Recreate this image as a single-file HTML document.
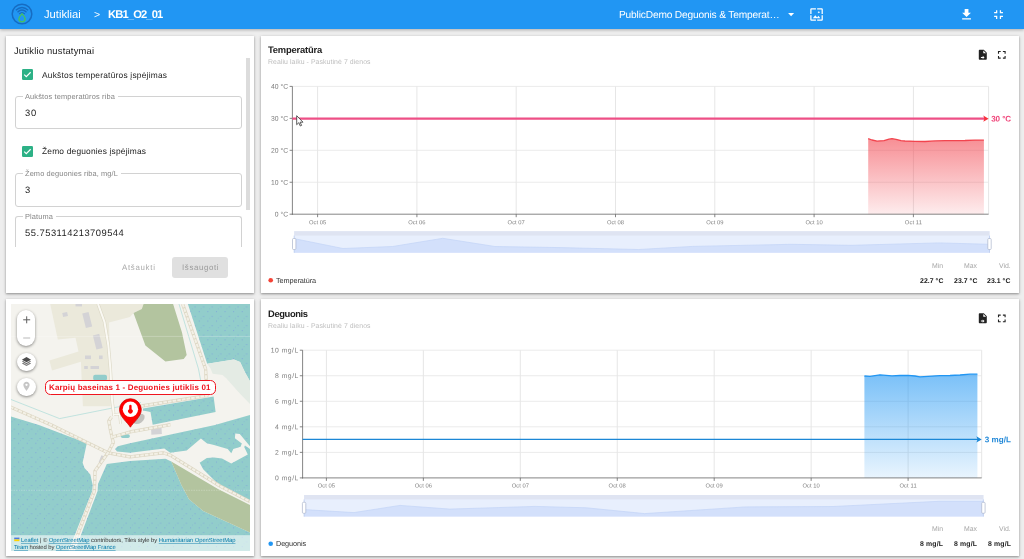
<!DOCTYPE html>
<html lang="lt"><head><meta charset="utf-8"><title>KB1_O2_01</title>
<style>
html,body{margin:0;padding:0}
body{width:1024px;height:559px;overflow:hidden;background:#eeeeee;font-family:"Liberation Sans",sans-serif;position:relative}
.t{position:absolute;white-space:nowrap;line-height:20px;transform:rotate(0.03deg)}
#app{position:absolute;left:0;top:0;width:1024px;height:559px;background:#eeeeee;will-change:transform;overflow:hidden}
header{position:absolute;left:0;top:0;width:1024px;height:29.2px;background:#2196f3;box-shadow:0 1px 3px rgba(0,0,0,.28);z-index:5}
header svg{position:absolute}
.card{position:absolute;background:#fff;box-shadow:0 1px 2px rgba(0,0,0,.30),0 1px 4px rgba(0,0,0,.16)}
.card svg{position:absolute;left:0;top:0}
.field{position:absolute;border:1px solid #d2d2d2;border-radius:3px;box-sizing:border-box}
.notch{position:absolute;background:#fff;height:4px}
.cb{position:absolute;width:10.7px;height:10.7px;border-radius:1.3px;background:#2db186}
.btn{position:absolute;background:#e0e0e0;border-radius:3px}
.sb{position:absolute;background:#dcdcdc}
.mbtn{position:absolute;background:#fff;box-shadow:0 1px 3px rgba(0,0,0,.45)}
</style></head>
<body>
<div id="app">
<header>
<svg style="left:10.2px;top:2.2px" width="24" height="24" viewBox="0 0 24 24">
 <circle cx="12" cy="12" r="9.8" fill="none" stroke="#166cc2" stroke-width="1.5"/>
 <path d="M5.800 8.300 Q12 2.600 18.200 8.300" fill="none" stroke="#166cc2" stroke-width="1.3"/>
 <path d="M7.500 10.200 Q12 5.800 16.500 10.200" fill="none" stroke="#166cc2" stroke-width="1.3"/>
 <path d="M9.200 12 Q12 9.200 14.800 12" fill="none" stroke="#166cc2" stroke-width="1.2"/>
 <path d="M12 11.800 C13.500 13.700 15.100 14.900 15.100 16.700 A3.100 3.100 0 0 1 8.900 16.700 C8.900 14.900 10.500 13.700 12 11.800Z" fill="none" stroke="#46c062" stroke-width="1.3"/>
</svg>
<span class="t" style="font-size:11.2px;font-weight:400;color:#fff;letter-spacing:0.002px;left:44.00px;top:4.00px;">Jutikliai</span>
<span class="t" style="font-size:10.5px;font-weight:400;color:#fff;letter-spacing:0.000px;left:93.90px;top:4.00px;">></span>
<span class="t" style="font-size:11.2px;font-weight:700;color:#fff;letter-spacing:-0.863px;left:108.00px;top:4.00px;">KB1_O2_01</span>
<span class="t" style="font-size:10.2px;font-weight:400;color:#fff;letter-spacing:-0.171px;left:618.70px;top:5.00px;">PublicDemo Deguonis & Temperat…</span>
<svg style="left:786px;top:10px" width="10" height="10" viewBox="0 0 10 10"><path d="M2.1 2.900h6l-3 3.400z" fill="#fff"/></svg>
<svg style="left:808.600px;top:7.200px" width="15.1" height="15.1" viewBox="0 0 24 24"><path fill="#fff" d="M4 4h7V2H4c-1.100 0-2 .900-2 2v7h2V4zm6 9l-4 5h12l-3-4-2.030 2.710L10 13zm7-4.500c0-.830-.670-1.500-1.500-1.500S14 7.670 14 8.500s.670 1.500 1.500 1.500S17 9.330 17 8.500zM20 2h-7v2h7v7h2V4c0-1.100-.900-2-2-2zm0 18h-7v2h7c1.100 0 2-.900 2-2v-7h-2v7zM4 13H2v7c0 1.100.900 2 2 2h7v-2H4v-7z"/></svg>
<svg style="left:958.900px;top:7.100px" width="15.1" height="15.1" viewBox="0 0 24 24"><path fill="#fff" d="M19 9h-4V3H9v6H5l7 7 7-7zM5 18v2h14v-2H5z"/></svg>
<svg style="left:990.900px;top:7.100px" width="15.1" height="15.1" viewBox="0 0 24 24"><path fill="#fff" d="M5 16h3v3h2v-5H5v2zm3-8H5v2h5V5H8v3zm6 11h2v-3h3v-2h-5v5zm2-11V5h-2v5h5V8h-3z"/></svg>
</header>
<section class="card" style="left:6.3px;top:35.7px;width:247.8px;height:257.3px">
<div class="cb" style="left:16.10px;top:33.30px"><svg width="10.7" height="10.7" viewBox="0 0 24 24" style="position:absolute;left:0;top:0"><path d="M5 12.500l4.600 4.600L19.400 7.300" fill="none" stroke="#fff" stroke-width="2.600"/></svg></div>
<div class="field" style="left:8.80px;top:60.50px;width:227.20px;height:33.20px"></div><div class="notch" style="left:16.50px;top:59.30px;width:95.20px;height:4.00px"></div>
<div class="cb" style="left:16.10px;top:110.40px"><svg width="10.7" height="10.7" viewBox="0 0 24 24" style="position:absolute;left:0;top:0"><path d="M5 12.500l4.600 4.600L19.400 7.300" fill="none" stroke="#fff" stroke-width="2.600"/></svg></div>
<div class="field" style="left:8.80px;top:137.30px;width:227.20px;height:33.90px"></div><div class="notch" style="left:16.50px;top:136.30px;width:98.20px;height:4.00px"></div>
<div class="field" style="left:8.80px;top:180.50px;width:227.20px;height:31.20px;border-bottom:none;border-radius:3px 3px 0 0"></div><div class="notch" style="left:16.50px;top:179.30px;width:33.20px;height:4.00px"></div>
<div class="sb" style="left:240.00px;top:22.30px;width:3.50px;height:152.00px"></div>
<div class="btn" style="left:166.00px;top:221.40px;width:55.60px;height:21.20px"></div>
<span class="t" style="font-size:9.4px;font-weight:400;color:#212121;letter-spacing:0.189px;left:7.70px;top:5.30px;">Jutiklio nustatymai</span>
<span class="t" style="font-size:8.4px;font-weight:400;color:#212121;letter-spacing:0.217px;left:35.70px;top:29.30px;">Aukštos temperatūros įspėjimas</span>
<span class="t" style="font-size:7.4px;font-weight:400;color:#858585;letter-spacing:0.147px;left:19.20px;top:51.30px;">Aukštos temperatūros riba</span>
<span class="t" style="font-size:9.4px;font-weight:400;color:#212121;letter-spacing:0.663px;left:19.20px;top:67.30px;">30</span>
<span class="t" style="font-size:8.4px;font-weight:400;color:#212121;letter-spacing:0.190px;left:35.70px;top:105.30px;">Žemo deguonies įspėjimas</span>
<span class="t" style="font-size:7.4px;font-weight:400;color:#858585;letter-spacing:0.118px;left:19.20px;top:128.30px;">Žemo deguonies riba, mg/L</span>
<span class="t" style="font-size:9.4px;font-weight:400;color:#212121;letter-spacing:0.000px;left:19.20px;top:144.30px;">3</span>
<span class="t" style="font-size:7.4px;font-weight:400;color:#858585;letter-spacing:0.112px;left:19.20px;top:171.30px;">Platuma</span>
<span class="t" style="font-size:9.4px;font-weight:400;color:#212121;letter-spacing:0.485px;left:19.20px;top:187.30px;">55.753114213709544</span>
<span class="t" style="font-size:7.9px;font-weight:400;color:#ababab;letter-spacing:0.689px;left:115.90px;top:222.30px;">Atšaukti</span>
<span class="t" style="font-size:7.9px;font-weight:400;color:#9a9a9a;letter-spacing:0.626px;left:175.50px;top:222.30px;">Išsaugoti</span>
</section>
<section class="card" style="left:260.6px;top:35.7px;width:758.4px;height:257.3px">
<svg style="left:-0.60px;top:-0.70px" width="760" height="259" viewBox="260 35 760 259" font-family="Liberation Sans, sans-serif">
<defs><linearGradient id="g1" x1="0" y1="0" x2="0" y2="1"><stop offset="0" stop-color="#f2444e" stop-opacity=".60"/><stop offset="1" stop-color="#f2444e" stop-opacity=".10"/></linearGradient></defs>
<line x1="292.4" y1="86.40" x2="988.6" y2="86.40" stroke="#ebebeb" stroke-width="1"/>
<line x1="292.4" y1="118.35" x2="988.6" y2="118.35" stroke="#ebebeb" stroke-width="1"/>
<line x1="292.4" y1="150.30" x2="988.6" y2="150.30" stroke="#ebebeb" stroke-width="1"/>
<line x1="292.4" y1="182.25" x2="988.6" y2="182.25" stroke="#ebebeb" stroke-width="1"/>
<line x1="317.60" y1="86.4" x2="317.60" y2="214.2" stroke="#e6e6e6" stroke-width="1"/>
<line x1="416.90" y1="86.4" x2="416.90" y2="214.2" stroke="#e6e6e6" stroke-width="1"/>
<line x1="516.20" y1="86.4" x2="516.20" y2="214.2" stroke="#e6e6e6" stroke-width="1"/>
<line x1="615.50" y1="86.4" x2="615.50" y2="214.2" stroke="#e6e6e6" stroke-width="1"/>
<line x1="714.80" y1="86.4" x2="714.80" y2="214.2" stroke="#e6e6e6" stroke-width="1"/>
<line x1="814.10" y1="86.4" x2="814.10" y2="214.2" stroke="#e6e6e6" stroke-width="1"/>
<line x1="913.40" y1="86.4" x2="913.40" y2="214.2" stroke="#e6e6e6" stroke-width="1"/>
<line x1="988.60" y1="86.4" x2="988.60" y2="214.2" stroke="#e6e6e6" stroke-width="1"/>
<polygon points="868.2,138.7 872.0,140.0 877.0,141.1 884.0,140.6 889.0,139.2 892.0,138.7 896.0,139.3 901.0,140.6 905.0,141.0 915.0,141.3 925.0,141.5 935.0,140.9 945.0,140.7 955.0,140.6 965.0,140.5 975.0,140.1 983.9,140.2 983.9,214.2 868.2,214.2" fill="url(#g1)"/>
<polyline points="868.2,138.7 872.0,140.0 877.0,141.1 884.0,140.6 889.0,139.2 892.0,138.7 896.0,139.3 901.0,140.6 905.0,141.0 915.0,141.3 925.0,141.5 935.0,140.9 945.0,140.7 955.0,140.6 965.0,140.5 975.0,140.1 983.9,140.2" fill="none" stroke="#f2444e" stroke-width="1.3" stroke-linejoin="round"/>
<line x1="292.40" y1="86.4" x2="292.40" y2="214.7" stroke="#666" stroke-width=".8"/>
<line x1="291.90" y1="214.20" x2="988.60" y2="214.20" stroke="#666" stroke-width=".8"/>
<line x1="289.60" y1="86.40" x2="292.40" y2="86.40" stroke="#666" stroke-width=".8"/>
<text x="288.1" y="88.8" font-size="6.8" fill="#7e7e7e" text-anchor="end" font-weight="400" transform="rotate(0.03 288.1 88.8)">40 °C</text>
<line x1="289.60" y1="118.35" x2="292.40" y2="118.35" stroke="#666" stroke-width=".8"/>
<text x="288.1" y="120.8" font-size="6.8" fill="#7e7e7e" text-anchor="end" font-weight="400" transform="rotate(0.03 288.1 120.8)">30 °C</text>
<line x1="289.60" y1="150.30" x2="292.40" y2="150.30" stroke="#666" stroke-width=".8"/>
<text x="288.1" y="152.7" font-size="6.8" fill="#7e7e7e" text-anchor="end" font-weight="400" transform="rotate(0.03 288.1 152.7)">20 °C</text>
<line x1="289.60" y1="182.25" x2="292.40" y2="182.25" stroke="#666" stroke-width=".8"/>
<text x="288.1" y="184.7" font-size="6.8" fill="#7e7e7e" text-anchor="end" font-weight="400" transform="rotate(0.03 288.1 184.7)">10 °C</text>
<line x1="289.60" y1="214.20" x2="292.40" y2="214.20" stroke="#666" stroke-width=".8"/>
<text x="288.1" y="216.6" font-size="6.8" fill="#7e7e7e" text-anchor="end" font-weight="400" transform="rotate(0.03 288.1 216.6)">0 °C</text>
<line x1="317.60" y1="214.2" x2="317.60" y2="217.2" stroke="#666" stroke-width=".8"/>
<text x="317.6" y="224.2" font-size="5.8" fill="#7e7e7e" text-anchor="middle" font-weight="400" textLength="17.2" lengthAdjust="spacing" transform="rotate(0.03 317.6 224.2)">Oct 05</text>
<line x1="416.90" y1="214.2" x2="416.90" y2="217.2" stroke="#666" stroke-width=".8"/>
<text x="416.9" y="224.2" font-size="5.8" fill="#7e7e7e" text-anchor="middle" font-weight="400" textLength="17.2" lengthAdjust="spacing" transform="rotate(0.03 416.9 224.2)">Oct 06</text>
<line x1="516.20" y1="214.2" x2="516.20" y2="217.2" stroke="#666" stroke-width=".8"/>
<text x="516.2" y="224.2" font-size="5.8" fill="#7e7e7e" text-anchor="middle" font-weight="400" textLength="17.2" lengthAdjust="spacing" transform="rotate(0.03 516.2 224.2)">Oct 07</text>
<line x1="615.50" y1="214.2" x2="615.50" y2="217.2" stroke="#666" stroke-width=".8"/>
<text x="615.5" y="224.2" font-size="5.8" fill="#7e7e7e" text-anchor="middle" font-weight="400" textLength="17.2" lengthAdjust="spacing" transform="rotate(0.03 615.5 224.2)">Oct 08</text>
<line x1="714.80" y1="214.2" x2="714.80" y2="217.2" stroke="#666" stroke-width=".8"/>
<text x="714.8" y="224.2" font-size="5.8" fill="#7e7e7e" text-anchor="middle" font-weight="400" textLength="17.2" lengthAdjust="spacing" transform="rotate(0.03 714.8 224.2)">Oct 09</text>
<line x1="814.10" y1="214.2" x2="814.10" y2="217.2" stroke="#666" stroke-width=".8"/>
<text x="814.1" y="224.2" font-size="5.8" fill="#7e7e7e" text-anchor="middle" font-weight="400" textLength="17.2" lengthAdjust="spacing" transform="rotate(0.03 814.1 224.2)">Oct 10</text>
<line x1="913.40" y1="214.2" x2="913.40" y2="217.2" stroke="#666" stroke-width=".8"/>
<text x="913.4" y="224.2" font-size="5.8" fill="#7e7e7e" text-anchor="middle" font-weight="400" textLength="17.2" lengthAdjust="spacing" transform="rotate(0.03 913.4 224.2)">Oct 11</text>
<line x1="292.4" y1="118.70" x2="985.6" y2="118.70" stroke="#ee4f86" stroke-width="2.2"/>
<polygon points="983.3,115.6 988.6,118.7 983.3,121.8 984.4,118.7" fill="#f8323c"/>
<text x="991.2" y="121.6" font-size="8.1" fill="#f0457a" text-anchor="start" font-weight="700" textLength="20.0" lengthAdjust="spacing" transform="rotate(0.03 991.2 121.6)">30 °C</text>
<rect x="294.2" y="231.2" width="695.3" height="21.6" fill="#e8effd"/>
<polygon points="294.2,238.6 296.0,239.0 343.0,248.5 392.5,246.5 442.8,238.3 495.0,246.5 560.0,247.6 638.6,249.5 692.7,246.4 791.0,244.3 851.0,245.3 939.0,242.9 989.5,244.3 989.5,252.8 294.2,252.8" fill="#d3e0fb"/>
<polyline points="294.2,238.6 296.0,239.0 343.0,248.5 392.5,246.5 442.8,238.3 495.0,246.5 560.0,247.6 638.6,249.5 692.7,246.4 791.0,244.3 851.0,245.3 939.0,242.9 989.5,244.3" fill="none" stroke="#c3d4f6" stroke-width=".7"/>
<rect x="294.2" y="231.2" width="695.3" height="4.4" fill="#dfe4f2"/>
<line x1="294.2" y1="235.6" x2="294.2" y2="252.8" stroke="#b9c9ee" stroke-width=".8"/>
<rect x="292.5" y="238.5" width="3.4" height="11" rx="1" fill="#fff" stroke="#aab4cc" stroke-width=".7"/>
<line x1="989.5" y1="235.6" x2="989.5" y2="252.8" stroke="#b9c9ee" stroke-width=".8"/>
<rect x="987.8" y="238.5" width="3.4" height="11" rx="1" fill="#fff" stroke="#aab4cc" stroke-width=".7"/>
<circle cx="270.7" cy="280.3" r="2.3" fill="#f44336"/>
<g fill="#222"><path transform="translate(976.8,48.7) scale(.5)" d="M14 2H6c-1.100 0-2 .900-2 2v16c0 1.100.900 2 2 2h12c1.100 0 2-.900 2-2V8l-6-6zm-1 1.500L18.500 9H13V3.500zM8.200 18.600l0-2.200 3.600 0 0-2.100 3.700 3.200-3.700 3.200 0-2.100z" fill-rule="evenodd"/>
<path transform="translate(995.2,48.2) scale(.55)" d="M7 14H5v5h5v-2H7v-3zm-2-4h2V7h3V5H5v5zm12 7h-3v2h5v-5h-2v3zM14 5v2h3v3h2V5h-5z"/></g>
</svg>
<span class="t" style="font-size:9.4px;font-weight:700;color:#212121;letter-spacing:-0.189px;left:7.40px;top:4.30px;">Temperatūra</span>
<span class="t" style="font-size:6.9px;font-weight:400;color:#bdbdbd;letter-spacing:0.079px;left:7.40px;top:16.30px;">Realiu laiku - Paskutinė 7 dienos</span>
<span class="t" style="font-size:7.3px;font-weight:400;color:#333;letter-spacing:-0.087px;left:15.50px;top:235.30px;">Temperatūra</span>
<span class="t" style="font-size:6.9px;font-weight:400;color:#a6a6a6;left:671.49px;top:220.30px;">Min</span>
<span class="t" style="font-size:6.9px;font-weight:400;color:#a6a6a6;left:703.37px;top:220.30px;">Max</span>
<span class="t" style="font-size:6.9px;font-weight:400;color:#a6a6a6;left:738.25px;top:220.30px;">Vid.</span>
<span class="t" style="font-size:6.9px;font-weight:700;color:#212121;letter-spacing:0.056px;left:659.20px;top:235.30px;">22.7 °C</span>
<span class="t" style="font-size:6.9px;font-weight:700;color:#212121;letter-spacing:0.056px;left:693.00px;top:235.30px;">23.7 °C</span>
<span class="t" style="font-size:6.9px;font-weight:700;color:#212121;letter-spacing:0.056px;left:726.80px;top:235.30px;">23.1 °C</span>
</section>
<section class="card" style="left:6.3px;top:299.3px;width:247.8px;height:256.8px">
<svg style="position:absolute;left:4.700px;top:4.700px" width="239" height="247.4" viewBox="11 304 239 247.4" font-family="Liberation Sans, sans-serif">
<defs><pattern id="dots" width="8.6" height="9.400" patternUnits="userSpaceOnUse"><circle cx="1.5" cy="1.5" r=".55" fill="#7a9fdc" fill-opacity=".9"/><circle cx="5.800" cy="6.200" r=".55" fill="#7a9fdc" fill-opacity=".9"/><circle cx="3.2" cy="8.300" r=".45" fill="#7a9fdc" fill-opacity=".75"/></pattern></defs>
<rect x="11" y="304" width="239" height="248" fill="#f4f3ee"/>
<polygon points="50.2,304.0 143.6,304.0 141.8,308.9 133.5,313.0 130.0,317.0 109.0,322.5 109.5,340.0 110.4,369.0 110.8,406.2 82.9,406.2 80.9,361.8 52.0,370.5 49.4,360.5 78.5,351.4 75.5,337.8 57.8,339.6" fill="#ebe9db"/>
<polygon points="143.6,304.0 173.1,304.0 182.0,332.5 186.7,355.0 183.7,359.1 165.4,361.5 145.4,345.5 133.5,313.0 141.8,308.9" fill="#b3c49f"/>
<polygon points="187.9,304.0 250.0,304.0 250.0,381.3 245.1,372.6 240.1,361.9 233.9,359.4 207.2,363.8" fill="#92cdcb"/>
<polygon points="187.9,304.0 250.0,304.0 250.0,381.3 245.1,372.6 240.1,361.9 233.9,359.4 207.2,363.8" fill="url(#dots)"/>
<polygon points="10.0,416.2 38.9,425.0 86.8,443.3 82.6,462.8 84.5,468.0 90.3,474.6 92.7,485.0 92.2,491.0 68.5,551.0 10.0,551.0" fill="#92cdcb"/>
<polygon points="10.0,416.2 38.9,425.0 86.8,443.3 82.6,462.8 84.5,468.0 90.3,474.6 92.7,485.0 92.2,491.0 68.5,551.0 10.0,551.0" fill="url(#dots)"/>
<polygon points="106.8,464.0 130.0,461.0 165.4,458.7 171.3,461.6 181.4,485.0 189.0,499.2 203.2,511.0 250.0,532.5 250.0,552.0 74.5,552.0 97.6,491.0 98.0,484.0" fill="#92cdcb"/>
<polygon points="106.8,464.0 130.0,461.0 165.4,458.7 171.3,461.6 181.4,485.0 189.0,499.2 203.2,511.0 250.0,532.5 250.0,552.0 74.5,552.0 97.6,491.0 98.0,484.0" fill="url(#dots)"/>
<polygon points="117.8,446.2 130.0,443.3 215.0,425.0 250.0,415.0 250.0,446.3 239.8,433.9 235.3,433.5 234.9,438.3 241.8,443.5 240.6,446.7 233.3,449.1 231.3,453.2 227.7,449.1 214.0,445.1 206.8,443.3 200.9,438.6 186.7,450.4 170.2,452.8 164.3,448.6 130.0,452.8 117.0,451.5 115.0,449.0" fill="#92cdcb"/>
<polygon points="117.8,446.2 130.0,443.3 215.0,425.0 250.0,415.0 250.0,446.3 239.8,433.9 235.3,433.5 234.9,438.3 241.8,443.5 240.6,446.7 233.3,449.1 231.3,453.2 227.7,449.1 214.0,445.1 206.8,443.3 200.9,438.6 186.7,450.4 170.2,452.8 164.3,448.6 130.0,452.8 117.0,451.5 115.0,449.0" fill="url(#dots)"/>
<polygon points="199.7,462.8 206.8,458.1 214.0,457.6 222.0,458.4 231.3,463.6 247.8,454.4 244.2,447.1 245.0,445.5 250.0,449.1 250.0,501.5 220.0,486.0 203.2,469.3" fill="#92cdcb"/>
<polygon points="199.7,462.8 206.8,458.1 214.0,457.6 222.0,458.4 231.3,463.6 247.8,454.4 244.2,447.1 245.0,445.5 250.0,449.1 250.0,501.5 220.0,486.0 203.2,469.3" fill="url(#dots)"/>
<polygon points="143.0,408.4 213.6,396.5 215.6,412.0 152.7,424.7 150.5,412.0 143.0,410.5" fill="#92cdcb"/>
<polygon points="143.0,408.4 213.6,396.5 215.6,412.0 152.7,424.7 150.5,412.0 143.0,410.5" fill="url(#dots)"/>
<polygon points="207.2,363.8 233.9,359.4 240.1,361.9 245.1,372.6 250.0,381.3 250.0,404.0 238.9,392.6 226.3,378.2 222.6,375.0 212.6,373.8 210.7,368.8" fill="#e4ebe4"/>
<rect x="93.200" y="374.700" width="13.8" height="6" rx="2" fill="#92cdcb"/>
<rect x="120.8" y="434.2" width="9" height="3.800" rx="1.8" fill="#92cdcb"/>
<polygon points="171.3,461.6 218.0,489.0 250.0,505.0 250.0,532.5 203.2,511.0 189.0,499.2 181.4,485.0" fill="#b3c49f"/>
<g fill="#d4d3d6">
<rect x="75.5" y="304" width="6.500" height="2.400"/>
<rect x="62.500" y="312.500" width="5" height="4" transform="rotate(-12 65 314)"/>
<rect x="84" y="312.500" width="6.500" height="15" transform="rotate(-14 87 320)"/>
<rect x="94.500" y="334.500" width="6.500" height="14.500" transform="rotate(-14 97.500 341.500)"/>
<rect x="85" y="355.500" width="6" height="3.600"/><rect x="99" y="355.500" width="3.600" height="3.600"/>
<rect x="84.200" y="366" width="3.600" height="3"/><rect x="90.500" y="366" width="8.500" height="3"/>
<rect x="151.2" y="428.200" width="10.5" height="6.200" transform="rotate(-3 156 431)"/>
<rect x="100" y="455.500" width="3.200" height="7.500" transform="rotate(22 101.5 459)"/>
</g>
<polyline points="10.0,399.1 59.6,418.6 118.7,406.8 141.0,402.5" fill="none" stroke="#b4dedb" stroke-width=".8"/>
<polyline points="179.0,304.0 198.5,369.0 201.0,382.0" fill="none" stroke="#b4dedb" stroke-width=".8"/>
<polyline points="98.0,304.0 104.5,322.0 108.3,345.0 110.4,369.0 112.0,400.0 114.0,416.0" fill="none" stroke="#dcd8c6" stroke-width="3.2" stroke-linejoin="round"/><polyline points="98.0,304.0 104.5,322.0 108.3,345.0 110.4,369.0 112.0,400.0 114.0,416.0" fill="none" stroke="#faf9f3" stroke-width="2.0" stroke-linejoin="round"/>
<polyline points="114.0,414.5 119.5,414.0 120.5,424.0" fill="none" stroke="#dcd8c6" stroke-width="2.6" stroke-linejoin="round"/><polyline points="114.0,414.5 119.5,414.0 120.5,424.0" fill="none" stroke="#faf9f3" stroke-width="1.4" stroke-linejoin="round"/>
<polyline points="182.6,304.0 205.6,369.0 207.0,395.7 141.6,406.0" fill="none" stroke="#ddd7c4" stroke-width="3.3" stroke-linejoin="round"/><polyline points="182.6,304.0 205.6,369.0 207.0,395.7 141.6,406.0" fill="none" stroke="#f3f0e6" stroke-width="2.0" stroke-linejoin="round" stroke-dasharray="3.6 1.1"/>
<polyline points="10.0,406.8 51.3,425.0 108.0,452.8 130.0,456.9 163.1,452.8 170.2,455.1 220.0,486.0 250.0,501.5" fill="none" stroke="#ddd7c4" stroke-width="3.3" stroke-linejoin="round"/><polyline points="10.0,406.8 51.3,425.0 108.0,452.8 130.0,456.9 163.1,452.8 170.2,455.1 220.0,486.0 250.0,501.5" fill="none" stroke="#f3f0e6" stroke-width="2.0" stroke-linejoin="round" stroke-dasharray="3.6 1.1"/>
<polyline points="111.5,417.0 108.8,421.0 110.4,430.0 113.3,442.7 108.0,452.8 95.0,471.0 94.4,491.0 71.4,551.0" fill="none" stroke="#ddd7c4" stroke-width="3.3" stroke-linejoin="round"/><polyline points="111.5,417.0 108.8,421.0 110.4,430.0 113.3,442.7 108.0,452.8 95.0,471.0 94.4,491.0 71.4,551.0" fill="none" stroke="#f3f0e6" stroke-width="2.0" stroke-linejoin="round" stroke-dasharray="3.6 1.1"/>
<polyline points="112.5,437.0 130.0,432.0 170.5,424.7" fill="none" stroke="#ddd7c4" stroke-width="3.3" stroke-linejoin="round"/><polyline points="112.5,437.0 130.0,432.0 170.5,424.7" fill="none" stroke="#f3f0e6" stroke-width="2.0" stroke-linejoin="round" stroke-dasharray="3.6 1.1"/>
<line x1="11" y1="336.400" x2="250" y2="336.400" stroke="#fff" stroke-opacity=".35" stroke-width=".7"/>
<line x1="11" y1="490.300" x2="250" y2="490.300" stroke="#fff" stroke-opacity=".35" stroke-width=".7" stroke-dasharray="1.5 1"/>
<ellipse cx="138.8" cy="419.000" rx="6.500" ry="4.300" fill="#000" fill-opacity=".2" transform="rotate(-35 138.8 419.000)"/>
<path d="M130.4 427.2 C127.8 422.800 119.500 416.800 119.500 409.600 A10.900 10.900 0 0 1 141.300 409.600 C141.300 416.800 133.000 422.800 130.400 427.200Z" fill="#ff0000" stroke="#c40000" stroke-width=".7"/>
<circle cx="130.4" cy="409.300" r="7.700" fill="#fff"/>
<path d="M129.2 406.000 a1.200 1.200 0 0 1 2.400 0 v3.300 a2.300 2.300 0 1 1 -2.400 0z" fill="#ff0000"/>
<rect x="11" y="535.2" width="239" height="17" fill="#fff" fill-opacity=".58"/>
<rect x="14.2" y="537.600" width="5.200" height="1.800" fill="#4c7be1"/><rect x="14.200" y="539.400" width="5.200" height="1.800" fill="#ffd500"/>
</svg>
<div class="mbtn" style="left:10.40px;top:10.30px;width:18.80px;height:36.70px;border-radius:9.500px"></div>
<svg style="left:10.40px;top:10.30px" width="19" height="37" viewBox="0 0 19 37"><path d="M6.200 9.800h7M9.700 6.300v7" stroke="#5f5f5f" stroke-width="1" fill="none"/><path d="M6.200 28h7" stroke="#b9b9b9" stroke-width="1" fill="none"/></svg>
<div class="mbtn" style="left:10.70px;top:53.60px;width:18.60px;height:18.60px;border-radius:50%"></div>
<svg style="left:10.50px;top:53.10px" width="19" height="19" viewBox="0 0 19 19"><path fill="#4d4d4d" d="M9.500 5.100 14.100 7.700 9.500 10.300 4.900 7.700z"/><path fill="#6a6a6a" d="M4.900 9.600 6.100 8.950 9.500 10.900 12.900 8.950 14.100 9.600 9.500 12.200z"/><path fill="#7a7a7a" d="M4.900 11.500 6.100 10.850 9.500 12.800 12.900 10.850 14.100 11.500 9.500 14.100z"/></svg>
<div class="mbtn" style="left:10.70px;top:78.50px;width:18.60px;height:18.60px;border-radius:50%"></div>
<svg style="left:10.45px;top:77.70px" width="19" height="19" viewBox="0 0 19 19"><path fill="#c6c6c6" fill-rule="evenodd" d="M9.500 4.700c-1.750 0-3.150 1.400-3.150 3.150 0 2.350 3.150 6.050 3.150 6.050s3.150-3.700 3.150-6.050c0-1.750-1.400-3.150-3.150-3.150zm0 4.300a1.150 1.150 0 1 1 0-2.300 1.150 1.150 0 0 1 0 2.300z"/></svg>
<div style="position:absolute;left:38.30px;top:80.50px;width:171.20px;height:14.80px;box-sizing:border-box;border:1.300px solid #f0141e;border-radius:5.5px;background:rgba(255,255,255,.92)"></div>
<span class="t" style="font-size:8.0px;font-weight:700;color:#f0141e;letter-spacing:0.158px;left:42.70px;top:78.70px;">Karpių baseinas 1 - Deguonies jutiklis 01</span>
<span class="t" style="font-size:5.9px;font-weight:400;color:#333;letter-spacing:-0.061px;left:14.90px;top:230.70px;"><span style="color:#0078a8;text-decoration:underline;text-decoration-thickness:.5px;text-decoration-color:rgba(0,120,168,.45)">Leaflet</span> | © <span style="color:#0078a8;text-decoration:underline;text-decoration-thickness:.5px;text-decoration-color:rgba(0,120,168,.45)">OpenStreetMap</span> contributors, Tiles style by <span style="color:#0078a8;text-decoration:underline;text-decoration-thickness:.5px;text-decoration-color:rgba(0,120,168,.45)">Humanitarian OpenStreetMap</span></span>
<span class="t" style="font-size:5.9px;font-weight:400;color:#333;letter-spacing:-0.091px;left:7.70px;top:237.70px;"><span style="color:#0078a8;text-decoration:underline;text-decoration-thickness:.5px;text-decoration-color:rgba(0,120,168,.45)">Team</span> hosted by <span style="color:#0078a8;text-decoration:underline;text-decoration-thickness:.5px;text-decoration-color:rgba(0,120,168,.45)">OpenStreetMap France</span></span>
</section>
<section class="card" style="left:260.6px;top:299.3px;width:758.4px;height:256.8px">
<svg style="left:-0.60px;top:-0.30px" width="760" height="259" viewBox="260 299 760 259" font-family="Liberation Sans, sans-serif">
<defs><linearGradient id="g2" x1="0" y1="0" x2="0" y2="1"><stop offset="0" stop-color="#2196f3" stop-opacity=".60"/><stop offset="1" stop-color="#2196f3" stop-opacity=".10"/></linearGradient></defs>
<line x1="302.6" y1="350.20" x2="981.7" y2="350.20" stroke="#ebebeb" stroke-width="1"/>
<line x1="302.6" y1="375.74" x2="981.7" y2="375.74" stroke="#ebebeb" stroke-width="1"/>
<line x1="302.6" y1="401.28" x2="981.7" y2="401.28" stroke="#ebebeb" stroke-width="1"/>
<line x1="302.6" y1="426.82" x2="981.7" y2="426.82" stroke="#ebebeb" stroke-width="1"/>
<line x1="302.6" y1="452.36" x2="981.7" y2="452.36" stroke="#ebebeb" stroke-width="1"/>
<line x1="326.40" y1="350.2" x2="326.40" y2="477.9" stroke="#e6e6e6" stroke-width="1"/>
<line x1="423.35" y1="350.2" x2="423.35" y2="477.9" stroke="#e6e6e6" stroke-width="1"/>
<line x1="520.30" y1="350.2" x2="520.30" y2="477.9" stroke="#e6e6e6" stroke-width="1"/>
<line x1="617.25" y1="350.2" x2="617.25" y2="477.9" stroke="#e6e6e6" stroke-width="1"/>
<line x1="714.20" y1="350.2" x2="714.20" y2="477.9" stroke="#e6e6e6" stroke-width="1"/>
<line x1="811.15" y1="350.2" x2="811.15" y2="477.9" stroke="#e6e6e6" stroke-width="1"/>
<line x1="908.10" y1="350.2" x2="908.10" y2="477.9" stroke="#e6e6e6" stroke-width="1"/>
<line x1="981.70" y1="350.2" x2="981.70" y2="477.9" stroke="#e6e6e6" stroke-width="1"/>
<polygon points="864.4,376.0 870.0,376.4 875.0,375.6 880.0,374.8 886.0,375.4 892.0,375.9 900.0,375.5 908.0,375.3 915.0,376.0 920.0,376.8 928.0,376.3 940.0,375.6 950.0,375.5 960.0,375.0 970.0,374.2 977.4,374.2 977.4,477.9 864.4,477.9" fill="url(#g2)"/>
<polyline points="864.4,376.0 870.0,376.4 875.0,375.6 880.0,374.8 886.0,375.4 892.0,375.9 900.0,375.5 908.0,375.3 915.0,376.0 920.0,376.8 928.0,376.3 940.0,375.6 950.0,375.5 960.0,375.0 970.0,374.2 977.4,374.2" fill="none" stroke="#2196f3" stroke-width="1.3" stroke-linejoin="round"/>
<line x1="302.60" y1="350.2" x2="302.60" y2="478.4" stroke="#666" stroke-width=".8"/>
<line x1="302.10" y1="477.90" x2="981.70" y2="477.90" stroke="#666" stroke-width=".8"/>
<line x1="299.80" y1="350.20" x2="302.60" y2="350.20" stroke="#666" stroke-width=".8"/>
<text x="298.8" y="352.6" font-size="6.8" fill="#7e7e7e" text-anchor="end" font-weight="400" letter-spacing="0.50" transform="rotate(0.03 298.8 352.6)">10 mg/L</text>
<line x1="299.80" y1="375.74" x2="302.60" y2="375.74" stroke="#666" stroke-width=".8"/>
<text x="298.8" y="378.1" font-size="6.8" fill="#7e7e7e" text-anchor="end" font-weight="400" letter-spacing="0.50" transform="rotate(0.03 298.8 378.1)">8 mg/L</text>
<line x1="299.80" y1="401.28" x2="302.60" y2="401.28" stroke="#666" stroke-width=".8"/>
<text x="298.8" y="403.7" font-size="6.8" fill="#7e7e7e" text-anchor="end" font-weight="400" letter-spacing="0.50" transform="rotate(0.03 298.8 403.7)">6 mg/L</text>
<line x1="299.80" y1="426.82" x2="302.60" y2="426.82" stroke="#666" stroke-width=".8"/>
<text x="298.8" y="429.2" font-size="6.8" fill="#7e7e7e" text-anchor="end" font-weight="400" letter-spacing="0.50" transform="rotate(0.03 298.8 429.2)">4 mg/L</text>
<line x1="299.80" y1="452.36" x2="302.60" y2="452.36" stroke="#666" stroke-width=".8"/>
<text x="298.8" y="454.8" font-size="6.8" fill="#7e7e7e" text-anchor="end" font-weight="400" letter-spacing="0.50" transform="rotate(0.03 298.8 454.8)">2 mg/L</text>
<line x1="299.80" y1="477.90" x2="302.60" y2="477.90" stroke="#666" stroke-width=".8"/>
<text x="298.8" y="480.3" font-size="6.8" fill="#7e7e7e" text-anchor="end" font-weight="400" letter-spacing="0.50" transform="rotate(0.03 298.8 480.3)">0 mg/L</text>
<line x1="326.40" y1="477.9" x2="326.40" y2="480.9" stroke="#666" stroke-width=".8"/>
<text x="326.4" y="487.5" font-size="5.8" fill="#7e7e7e" text-anchor="middle" font-weight="400" textLength="17.2" lengthAdjust="spacing" transform="rotate(0.03 326.4 487.5)">Oct 05</text>
<line x1="423.35" y1="477.9" x2="423.35" y2="480.9" stroke="#666" stroke-width=".8"/>
<text x="423.3" y="487.5" font-size="5.8" fill="#7e7e7e" text-anchor="middle" font-weight="400" textLength="17.2" lengthAdjust="spacing" transform="rotate(0.03 423.3 487.5)">Oct 06</text>
<line x1="520.30" y1="477.9" x2="520.30" y2="480.9" stroke="#666" stroke-width=".8"/>
<text x="520.3" y="487.5" font-size="5.8" fill="#7e7e7e" text-anchor="middle" font-weight="400" textLength="17.2" lengthAdjust="spacing" transform="rotate(0.03 520.3 487.5)">Oct 07</text>
<line x1="617.25" y1="477.9" x2="617.25" y2="480.9" stroke="#666" stroke-width=".8"/>
<text x="617.2" y="487.5" font-size="5.8" fill="#7e7e7e" text-anchor="middle" font-weight="400" textLength="17.2" lengthAdjust="spacing" transform="rotate(0.03 617.2 487.5)">Oct 08</text>
<line x1="714.20" y1="477.9" x2="714.20" y2="480.9" stroke="#666" stroke-width=".8"/>
<text x="714.2" y="487.5" font-size="5.8" fill="#7e7e7e" text-anchor="middle" font-weight="400" textLength="17.2" lengthAdjust="spacing" transform="rotate(0.03 714.2 487.5)">Oct 09</text>
<line x1="811.15" y1="477.9" x2="811.15" y2="480.9" stroke="#666" stroke-width=".8"/>
<text x="811.1" y="487.5" font-size="5.8" fill="#7e7e7e" text-anchor="middle" font-weight="400" textLength="17.2" lengthAdjust="spacing" transform="rotate(0.03 811.1 487.5)">Oct 10</text>
<line x1="908.10" y1="477.9" x2="908.10" y2="480.9" stroke="#666" stroke-width=".8"/>
<text x="908.1" y="487.5" font-size="5.8" fill="#7e7e7e" text-anchor="middle" font-weight="400" textLength="17.2" lengthAdjust="spacing" transform="rotate(0.03 908.1 487.5)">Oct 11</text>
<line x1="302.6" y1="439.40" x2="978.7" y2="439.40" stroke="#1b87d6" stroke-width="1.3"/>
<polygon points="976.4,436.3 981.7,439.4 976.4,442.5 977.5,439.4" fill="#1b87d6"/>
<text x="984.8" y="442.3" font-size="8.1" fill="#2389d8" text-anchor="start" font-weight="700" textLength="26.2" lengthAdjust="spacing" transform="rotate(0.03 984.8 442.3)">3 mg/L</text>
<rect x="304.1" y="495.0" width="679.3" height="21.6" fill="#e8effd"/>
<polygon points="304.1,509.6 354.0,512.6 400.0,505.4 449.8,509.1 535.0,506.4 586.5,507.8 644.6,513.6 745.5,506.9 833.0,506.5 939.0,501.3 983.4,501.3 983.4,516.6 304.1,516.6" fill="#d3e0fb"/>
<polyline points="304.1,509.6 354.0,512.6 400.0,505.4 449.8,509.1 535.0,506.4 586.5,507.8 644.6,513.6 745.5,506.9 833.0,506.5 939.0,501.3 983.4,501.3" fill="none" stroke="#c3d4f6" stroke-width=".7"/>
<rect x="304.1" y="495.0" width="679.3" height="4.4" fill="#dfe4f2"/>
<line x1="304.1" y1="499.4" x2="304.1" y2="516.6" stroke="#b9c9ee" stroke-width=".8"/>
<rect x="302.4" y="502.3" width="3.4" height="11" rx="1" fill="#fff" stroke="#aab4cc" stroke-width=".7"/>
<line x1="983.4" y1="499.4" x2="983.4" y2="516.6" stroke="#b9c9ee" stroke-width=".8"/>
<rect x="981.7" y="502.3" width="3.4" height="11" rx="1" fill="#fff" stroke="#aab4cc" stroke-width=".7"/>
<circle cx="270.7" cy="543.7" r="2.3" fill="#2196f3"/>
<g fill="#222"><path transform="translate(976.8,312.3) scale(.5)" d="M14 2H6c-1.100 0-2 .900-2 2v16c0 1.100.900 2 2 2h12c1.100 0 2-.900 2-2V8l-6-6zm-1 1.500L18.500 9H13V3.500zM8.200 18.600l0-2.200 3.600 0 0-2.100 3.700 3.200-3.700 3.200 0-2.100z" fill-rule="evenodd"/>
<path transform="translate(995.2,311.8) scale(.55)" d="M7 14H5v5h5v-2H7v-3zm-2-4h2V7h3V5H5v5zm12 7h-3v2h5v-5h-2v3zM14 5v2h3v3h2V5h-5z"/></g>
</svg>
<span class="t" style="font-size:9.4px;font-weight:700;color:#212121;letter-spacing:-0.388px;left:7.40px;top:4.70px;">Deguonis</span>
<span class="t" style="font-size:6.9px;font-weight:400;color:#bdbdbd;letter-spacing:0.079px;left:7.40px;top:16.70px;">Realiu laiku - Paskutinė 7 dienos</span>
<span class="t" style="font-size:7.3px;font-weight:400;color:#333;letter-spacing:-0.106px;left:15.10px;top:234.70px;">Deguonis</span>
<span class="t" style="font-size:6.9px;font-weight:400;color:#a6a6a6;left:671.49px;top:219.70px;">Min</span>
<span class="t" style="font-size:6.9px;font-weight:400;color:#a6a6a6;left:703.37px;top:219.70px;">Max</span>
<span class="t" style="font-size:6.9px;font-weight:400;color:#a6a6a6;left:738.25px;top:219.70px;">Vid.</span>
<span class="t" style="font-size:6.9px;font-weight:700;color:#212121;letter-spacing:0.136px;left:659.70px;top:234.70px;">8 mg/L</span>
<span class="t" style="font-size:6.9px;font-weight:700;color:#212121;letter-spacing:0.136px;left:693.50px;top:234.70px;">8 mg/L</span>
<span class="t" style="font-size:6.9px;font-weight:700;color:#212121;letter-spacing:0.136px;left:727.30px;top:234.70px;">8 mg/L</span>
</section>
<svg style="position:absolute;left:295.500px;top:114.500px;z-index:9" width="9" height="12" viewBox="0 0 9 12"><path d="M.7.700v9l2.100-2 1.500 3.300 1.300-.600-1.500-3.200h2.900z" fill="#fff" stroke="#333" stroke-width=".8"/></svg>
</div>
</body></html>
